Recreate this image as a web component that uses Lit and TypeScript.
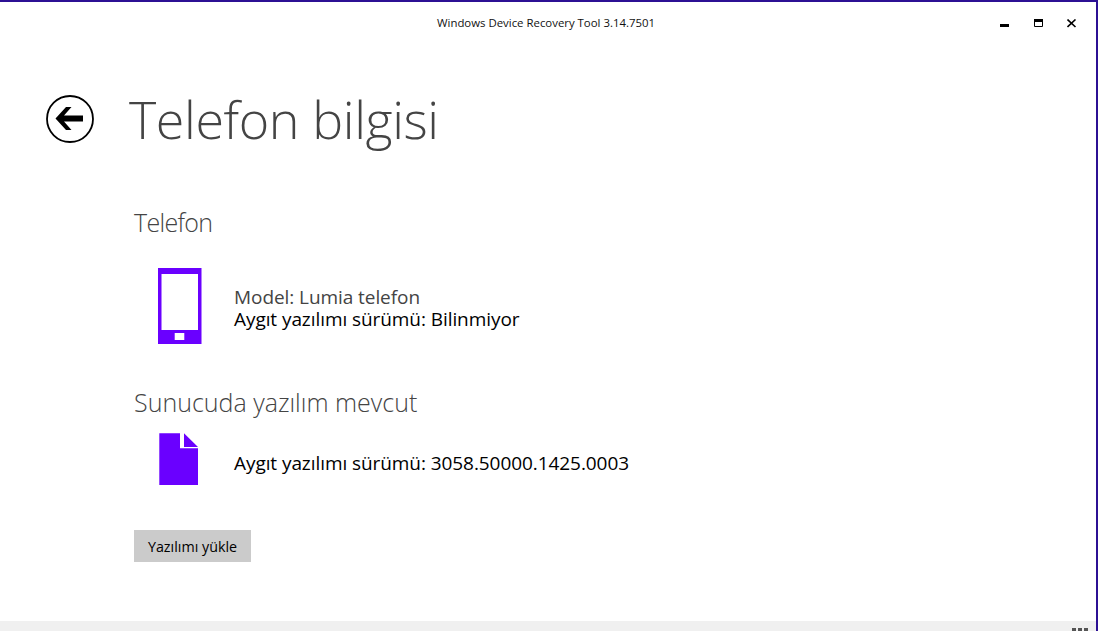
import { LitElement, html, css } from "lit";
import { customElement } from "lit/decorators.js";

@customElement("app-root")
export class AppRoot extends LitElement {
  static styles = css`
    :host {
      display: block;
      width: 1098px;
      height: 631px;
      overflow: hidden;
      font-family: "Open Sans", "Noto Sans", sans-serif;
      color: #000;
    }
    .window {
      height: 631px;
      box-sizing: border-box;
      display: flex;
      flex-direction: column;
      background: #fff;
      border-top: 2px solid #2c1094;
      border-right: 2px solid #2c1094;
    }
    .titlebar {
      height: 42px;
      flex: none;
      display: grid;
      grid-template-columns: 1fr auto 1fr;
    }
    .app-title {
      grid-column: 2;
      font-size: 11.4px;
      line-height: 16px;
      padding: 13px 4px 0 0;
      color: #111;
    }
    .controls {
      grid-column: 3;
      justify-self: end;
      margin: 17px 19px 0 0;
      display: flex;
      gap: 24px;
    }
    .controls svg {
      display: block;
    }
    .controls .close {
      margin-left: -1px;
    }
    .content {
      flex: 1;
      padding-left: 46px;
    }
    .header {
      display: flex;
      align-items: center;
      height: 66px;
      margin-top: 42px;
    }
    .back {
      display: block;
      flex: none;
      margin-right: 35px;
    }
    h1 {
      margin: 0;
      font-size: 52px;
      font-weight: 300;
      line-height: 66px;
      color: #444;
      letter-spacing: -0.4px;
    }
    .body {
      padding-left: 88px;
    }
    h2 {
      margin: 0;
      font-size: 25px;
      font-weight: 300;
      line-height: 32px;
      color: #444;
    }
    .phone-title {
      margin-top: 54px;
      letter-spacing: -0.7px;
    }
    .sw-title {
      margin-top: 42px;
    }
    .row {
      display: flex;
      align-items: center;
    }
    .phone-row {
      height: 76px;
      margin-top: 30px;
      padding-left: 24px;
    }
    .file-row {
      height: 52px;
      margin-top: 15px;
      padding-left: 25px;
    }
    .phone-row .info {
      margin-left: 32px;
      padding-top: 4px;
    }
    .file-row .info {
      margin-left: 36px;
      padding-top: 8px;
    }
    .info div {
      font-size: 19px;
      line-height: 22px;
      letter-spacing: -0.07px;
      white-space: nowrap;
    }
    .info .muted {
      color: #444;
    }
    button {
      display: block;
      margin-top: 45px;
      width: 117px;
      height: 32px;
      padding: 0;
      border: 0;
      background: #cbcbcb;
      color: #000;
      font-family: inherit;
      font-size: 14.3px;
      font-weight: 500;
    }
    .statusbar {
      flex: none;
      position: relative;
      height: 10px;
      background: #f0f0f0;
    }
    .dots {
      position: absolute;
      right: 8px;
      bottom: 0;
      display: flex;
      gap: 2px;
    }
    .dots span {
      width: 4px;
      height: 3px;
      background: #555;
    }
  `;

  render() {
    return html`
      <div class="window">
        <div class="titlebar">
          <div class="app-title">Windows Device Recovery Tool 3.14.7501</div>
          <div class="controls">
            <svg width="10" height="10" viewBox="0 0 10 10">
              <rect x="0" y="5" width="9" height="3" fill="#000" />
            </svg>
            <svg width="10" height="10" viewBox="0 0 10 10">
              <path d="M0.5 0.5h8v7h-8z" fill="none" stroke="#000" />
              <rect x="0" y="0" width="9" height="3" fill="#000" />
            </svg>
            <svg class="close" width="10" height="10" viewBox="0 0 10 10">
              <path d="M0.5 0.5l8 7.5M8.5 0.5l-8 7.5" fill="none" stroke="#000" stroke-width="1.6" />
            </svg>
          </div>
        </div>
        <div class="content">
          <div class="header">
            <svg class="back" width="48" height="48" viewBox="0 0 48 48">
              <circle cx="24" cy="24" r="23" fill="none" stroke="#000" stroke-width="1.8" />
              <path d="M9.5 23.5L20 12h5.5L18 20.5H37v6H18L25.5 35H20z" fill="#000" />
            </svg>
            <h1>Telefon bilgisi</h1>
          </div>
          <div class="body">
            <h2 class="phone-title">Telefon</h2>
            <div class="row phone-row">
              <svg width="44" height="76" viewBox="0 0 44 76">
                <path
                  fill-rule="evenodd"
                  fill="#6a00ff"
                  d="M0 0h43.5v76H0zM3.5 6v56H40V6zM16.7 65v7h9.6v-7z"
                />
              </svg>
              <div class="info">
                <div class="muted">Model: Lumia telefon</div>
                <div>Aygıt yazılımı sürümü: Bilinmiyor</div>
              </div>
            </div>
            <h2 class="sw-title">Sunucuda yazılım mevcut</h2>
            <div class="row file-row">
              <svg width="39" height="52" viewBox="0 0 39 52">
                <path fill="#6a00ff" d="M0.3 0.3h20.7v15h18v36.7H0.3zM25 0.3v13.7h14z" />
              </svg>
              <div class="info">
                <div>Aygıt yazılımı sürümü: 3058.50000.1425.0003</div>
              </div>
            </div>
            <button>Yazılımı yükle</button>
          </div>
        </div>
        <div class="statusbar">
          <div class="dots"><span></span><span></span><span></span></div>
        </div>
      </div>
    `;
  }
}
